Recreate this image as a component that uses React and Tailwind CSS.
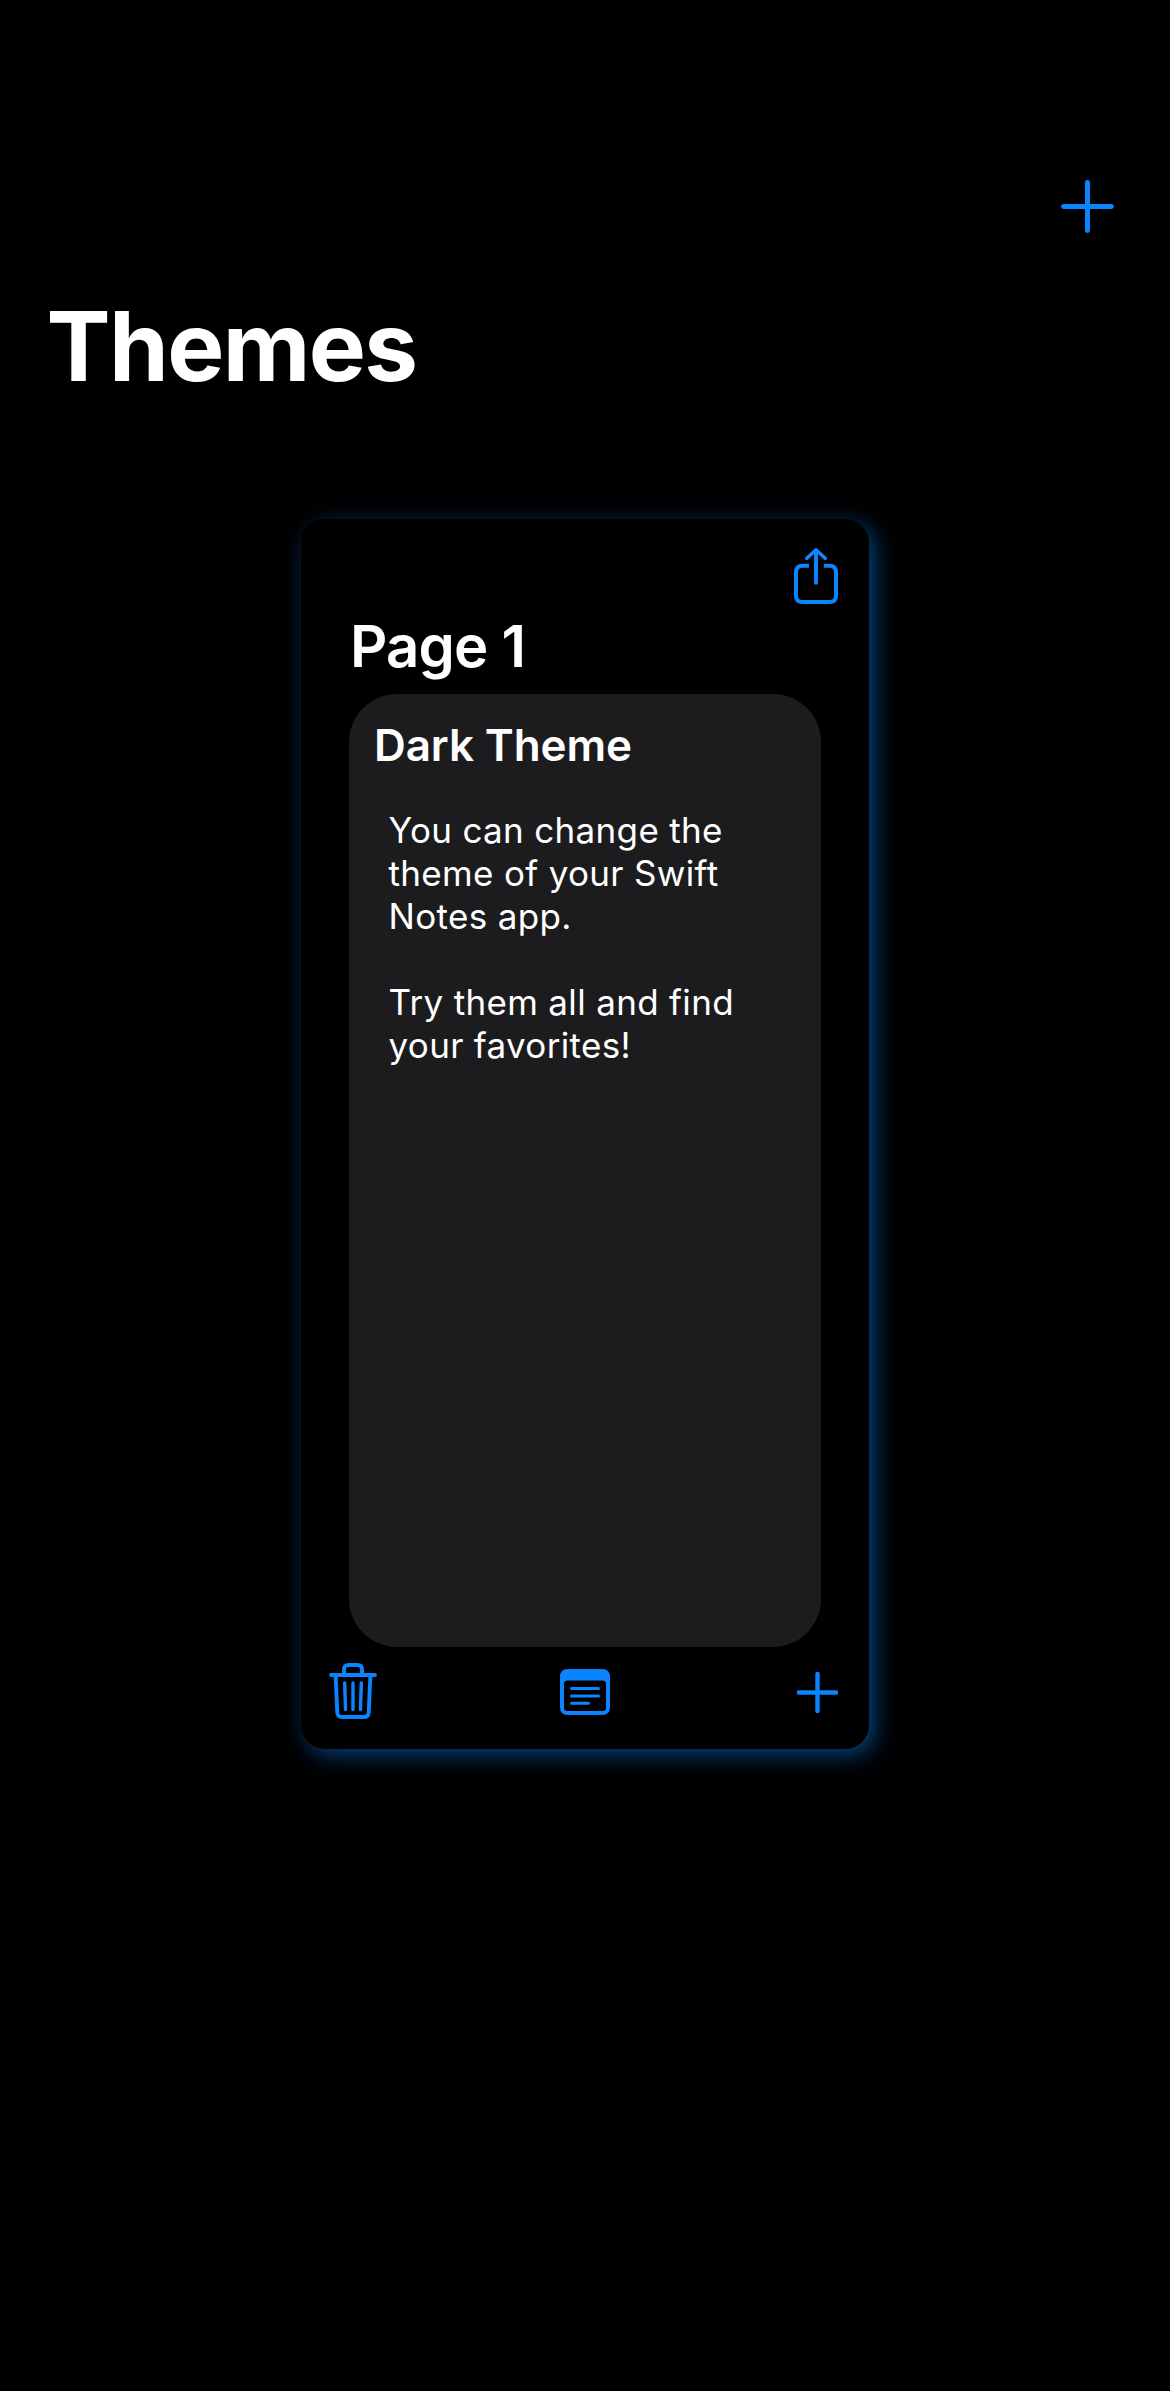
const strokeProps = {
  fill: "none",
  stroke: "currentColor",
  strokeLinecap: "round",
  strokeLinejoin: "round",
};

function PlusIcon({ className, strokeWidth }) {
  return (
    <svg viewBox="0 0 52 52" className={className} {...strokeProps} strokeWidth={strokeWidth}>
      <path d="M26 2.5v47M2.5 26h47" />
    </svg>
  );
}

function ShareIcon() {
  return (
    <svg viewBox="0 0 44 56" className="h-14 w-11" {...strokeProps} strokeWidth="4">
      <path d="M22 34.7V3" />
      <path d="M12.8 10.4 22 1.8l9.2 8.6" strokeWidth="3.5" />
      <path d="M15 17.7H8.5Q2 17.7 2 24.2V47.5Q2 54 8.5 54h27Q42 54 42 47.5V24.2Q42 17.7 35.5 17.7H29.8" strokeLinecap="butt" />
    </svg>
  );
}

function TrashIcon() {
  return (
    <svg viewBox="0 0 48 56" className="h-14 w-12" {...strokeProps} strokeWidth="3.9">
      <path d="M2 12h44" />
      <path d="M15 11.5V6.5Q15 2 19.5 2h9Q33 2 33 6.500v5" />
      <path d="M6.600 12.500 8.300 49.500Q8.600 54 13 54h22Q39.400 54 39.700 49.500L41.400 12.500" />
      <path d="M15.700 20l.8 26.500M24 20v26.500M32.300 20l-.8 26.500" strokeWidth="3.400" />
    </svg>
  );
}

function NoteIcon() {
  return (
    <svg viewBox="0 0 50 46" className="h-[46px] w-[50px]" fill="currentColor">
      <path
        fillRule="evenodd"
        d="M8 0H42Q50 0 50 8V38Q50 46 42 46H8Q0 46 0 38V8Q0 0 8 0ZM7.500 11.500Q4 11.500 4 15V38.500Q4 42 7.500 42h35Q46 42 46 38.500V15Q46 11.500 42.500 11.500Z"
      />
      <path d="M11.500 19.500h27M11.500 27h27M11.500 34.300h17" stroke="currentColor" strokeWidth="3" strokeLinecap="round" />
    </svg>
  );
}

export default function App() {
  return (
    <div className="flex h-[2391px] w-[1170px] flex-col items-center bg-black font-['Inter',sans-serif] text-white">
      <header className="flex w-full justify-end pt-[180px] pr-14">
        <button aria-label="Add theme" className="text-[#0a84ff]">
          <PlusIcon className="size-[53px]" strokeWidth="4.900" />
        </button>
      </header>
      <h1 className="mt-[53px] w-full pl-[46.5px] text-[96px] leading-[120px] font-bold tracking-[-1.6px]">Themes</h1>

      <section className="mt-[113px] flex h-[1230px] w-[568px] flex-col rounded-[24px] bg-black px-12 shadow-[6px_6px_22px_rgba(10,132,255,0.49)]">
        <div className="-mr-[17px] flex justify-end pt-[29px] text-[#0a84ff]">
          <button aria-label="Share">
            <ShareIcon />
          </button>
        </div>
        <h2 className="mt-[7px] pl-px text-[58px] leading-[70px] font-semibold tracking-[-0.8px]">Page 1</h2>
        <article className="mt-[13px] h-[953px] rounded-[48px] bg-[#1c1c1e] pt-6 pl-[25px]">
          <h3 className="text-[44px] leading-[54px] font-semibold tracking-[-0.1px]">Dark Theme</h3>
          <p className="mt-[37px] pl-[14.5px] text-[35px] leading-[43px] tracking-[0.33px] whitespace-nowrap">
            <span className="block">You can change the</span>
            <span className="block">theme of your Swift</span>
            <span className="block">Notes app.</span>
            <span className="mt-[43px] block">Try them all and find</span>
            <span className="block">your favorites!</span>
          </p>
        </article>
        <footer className="-mr-[17px] -ml-5 mt-4 flex items-start text-[#0a84ff]">
          <button aria-label="Delete">
            <TrashIcon />
          </button>
          <button aria-label="Note" className="mt-1.5 ml-[183px]">
            <NoteIcon />
          </button>
          <button aria-label="Add" className="mt-[9px] ml-[187px]">
            <PlusIcon className="size-[41px]" strokeWidth="5.600" />
          </button>
        </footer>
      </section>
    </div>
  );
}
